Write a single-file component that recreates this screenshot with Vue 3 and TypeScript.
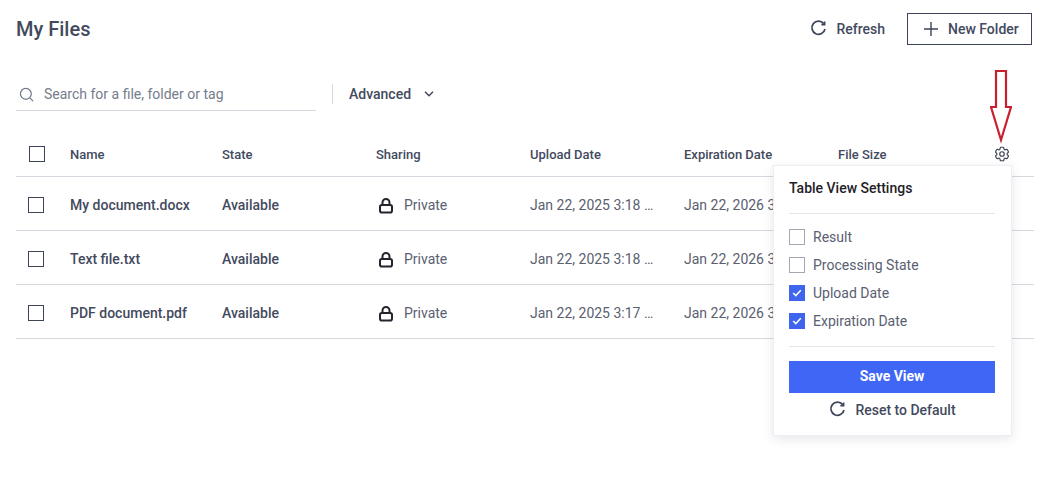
<script setup lang="ts">
interface FileRow { name: string; upload: string }
const rows: FileRow[] = [
  { name: 'My document.docx', upload: 'Jan 22, 2025 3:18 PM' },
  { name: 'Text file.txt', upload: 'Jan 22, 2025 3:18 PM' },
  { name: 'PDF document.pdf', upload: 'Jan 22, 2025 3:17 PM' },
]
const expiry = 'Jan 22, 2026 3:18 PM'
const settings = [
  { label: 'Result', on: false },
  { label: 'Processing State', on: false },
  { label: 'Upload Date', on: true },
  { label: 'Expiration Date', on: true },
]
const refreshPath = 'M13.7 3.6A6.6 6.6 0 1 0 15 9'
const gearPath = 'M9.594 3.94c.09-.542.56-.94 1.11-.94h2.593c.55 0 1.02.398 1.11.94l.213 1.281c.063.374.313.686.645.87.074.04.147.083.22.127.325.196.72.257 1.075.124l1.217-.456a1.125 1.125 0 0 1 1.37.49l1.296 2.247a1.125 1.125 0 0 1-.26 1.431l-1.003.827c-.293.241-.438.613-.43.992a7.723 7.723 0 0 1 0 .255c-.008.378.137.75.43.991l1.004.827c.424.35.534.955.26 1.43l-1.298 2.247a1.125 1.125 0 0 1-1.369.491l-1.217-.456c-.355-.133-.75-.072-1.076.124a6.47 6.47 0 0 1-.22.128c-.331.183-.581.495-.644.869l-.213 1.281c-.09.543-.56.94-1.11.94h-2.594c-.55 0-1.019-.398-1.11-.94l-.213-1.281c-.062-.374-.312-.686-.644-.87a6.52 6.52 0 0 1-.22-.127c-.325-.196-.72-.257-1.076-.124l-1.217.456a1.125 1.125 0 0 1-1.369-.49l-1.297-2.247a1.125 1.125 0 0 1 .26-1.431l1.004-.827c.292-.24.437-.613.43-.991a6.932 6.932 0 0 1 0-.255c.007-.38-.138-.751-.43-.992l-1.004-.827a1.125 1.125 0 0 1-.26-1.43l1.297-2.247a1.125 1.125 0 0 1 1.37-.491l1.216.456c.356.133.751.072 1.076-.124.072-.044.146-.086.22-.128.332-.183.582-.495.644-.869l.214-1.28Z'
</script>

<template>
  <div class="page">
    <header class="top">
      <h1 class="title">My Files</h1>
      <div class="actions">
        <button class="refresh">
          <svg width="18" height="18" viewBox="-1 0 18 18" fill="none" stroke="#3d4459" stroke-width="1.7"><path :d="refreshPath" /><path d="M14.6 1.4v3.2h-3.2" /></svg>
          <span>Refresh</span>
        </button>
        <button class="new-folder">
          <svg width="16" height="16" viewBox="0 0 16 16" stroke="#3d4459" stroke-width="1.4"><path d="M8 1v14M1 8h14" /></svg>
          <span>New Folder</span>
        </button>
      </div>
    </header>

    <div class="filters">
      <label class="search">
        <svg width="15" height="15" viewBox="0 0 16 16" fill="none" stroke="#6f7787" stroke-width="1.3"><circle cx="7.3" cy="7.3" r="5.8" /><path d="M11.6 11.6 15 15" /></svg>
        <span class="placeholder">Search for a file, folder or tag</span>
      </label>
      <span class="vr"></span>
      <span class="advanced">Advanced</span>
      <svg class="chev" width="12" height="8" viewBox="0 0 12 8" fill="none" stroke="#3d4459" stroke-width="1.4"><path d="M2 1.8 6 5.8l4-4" /></svg>
    </div>

    <div class="table">
      <div class="row head">
        <span class="box head-box"></span>
        <span>Name</span><span>State</span><span>Sharing</span><span>Upload Date</span><span>Expiration Date</span><span>File Size</span>
        <svg class="gear" width="18" height="18" viewBox="0 0 24 24" fill="none" stroke="#3d4459" stroke-width="1.6" stroke-linejoin="round"><path :d="gearPath" /><circle cx="12" cy="12" r="3" /></svg>
      </div>
      <div v-for="r in rows" :key="r.name" class="row body">
        <span class="box"></span>
        <span class="strong">{{ r.name }}</span>
        <span class="strong">Available</span>
        <span class="sharing">
          <svg class="lock" width="14" height="16" viewBox="0 0 14 16" fill="none" stroke="#22252e" stroke-width="2"><path d="M3.500 7V4.500a3.500 3.500 0 0 1 7 0V7" /><rect x="1" y="7" width="12" height="7.500" rx="1.800" /></svg>
          <span>Private</span>
        </span>
        <span class="cell">{{ r.upload }}</span>
        <span class="cell">{{ expiry }}</span>
      </div>
    </div>

    <svg class="arrow" width="22" height="74" viewBox="0 0 22 74" fill="#fff" stroke="#c8202f" stroke-width="2.200"><path d="M6 1h10v36h5L11 70 1 37h5z" /></svg>

    <aside class="pop">
      <div class="pop-title">Table View Settings</div>
      <div class="opts">
        <label v-for="s in settings" :key="s.label" class="opt">
          <span class="cb" :class="{ on: s.on }">
            <svg v-if="s.on" width="10" height="8" viewBox="0 0 10 8" fill="none" stroke="#fff" stroke-width="1.6"><path d="M1.200 4 3.800 6.500 8.800 1.300" /></svg>
          </span>
          <span>{{ s.label }}</span>
        </label>
      </div>
      <button class="save">Save View</button>
      <button class="reset">
        <svg width="18" height="18" viewBox="-1 0 18 18" fill="none" stroke="#3d4459" stroke-width="1.7"><path :d="refreshPath" /><path d="M14.6 1.4v3.2h-3.2" /></svg>
        <span>Reset to Default</span>
      </button>
    </aside>
  </div>
</template>

<style>
html, body { margin: 0; background: #fff; }
</style>

<style scoped>
.page {
  position: relative;
  width: 1053px;
  height: 502px;
  overflow: hidden;
  box-sizing: border-box;
  padding: 13px 19px 0 16px;
  font-family: Roboto, "Liberation Sans", sans-serif;
  font-size: 14px;
  color: #434a5e;
}
button { font: inherit; color: inherit; background: none; border: 0; padding: 0; }
.top { display: flex; justify-content: space-between; align-items: center; height: 32px; padding-right: 2px; }
.title { margin: 0; font-size: 20px; font-weight: 500; line-height: 32px; }
.actions { display: flex; align-items: center; }
.refresh { display: flex; align-items: center; gap: 9px; margin-right: 22px; font-weight: 500; }
.new-folder {
  display: flex; align-items: center; gap: 9px;
  box-sizing: border-box; width: 125px; height: 32px;
  padding-left: 15px; border: 1px solid #3d4459; font-weight: 500;
}
.filters { display: flex; align-items: center; margin-top: 33px; height: 32px; }
.search {
  display: flex; align-items: center; gap: 10px;
  box-sizing: border-box; width: 300px; height: 33px; margin-top: 1px; padding-left: 3px;
  border-bottom: 1px solid #d5d8de;
}
.placeholder { color: #757c8b; }
.vr { width: 1px; height: 20px; background: #d5d8de; margin: 0 16px; }
.advanced { font-weight: 500; }
.chev { margin-left: 12px; }
.table { margin-top: 22px; }
.row { display: grid; grid-template-columns: 54px 152px 154px 154px 154px 154px 1fr; align-items: center; border-bottom: 1px solid #d5d8de; }
.head { height: 44px; font-size: 13px; font-weight: 500; position: relative; }
.body { height: 51px; padding-top: 2px; }
.box { display: block; box-sizing: border-box; width: 16px; height: 16px; margin-left: 12px; border: 1px solid #3d4459; }
.head-box { margin-left: 13px; }
.gear { position: absolute; left: 977px; top: 13px; }
.strong { font-weight: 500; }
.sharing { display: flex; align-items: center; gap: 11px; padding-left: 3px; color: #5a6070; }
.lock { margin-top: 2px; }
.cell {
  white-space: nowrap; overflow: hidden; text-overflow: ellipsis;
  width: 124px; color: #5a6070;
}
.arrow { position: absolute; left: 990px; top: 70px; }
.pop {
  position: absolute; left: 773px; top: 165px;
  box-sizing: border-box; width: 239px; height: 271px; padding: 0 16px 0 15px;
  background: #fff; border: 1px solid #eceef2;
  box-shadow: 0 3px 10px rgba(60, 70, 100, .13);
}
.pop-title { height: 47px; line-height: 44px; border-bottom: 1px solid #e3e5ea; font-weight: 500; color: #1f2128; margin-bottom: 9px; }
.opts { border-bottom: 1px solid #e3e5ea; padding-bottom: 11px; margin-bottom: 14px; }
.opt { display: flex; align-items: center; gap: 8px; height: 28px; color: #5a6070; }
.cb { display: flex; align-items: center; justify-content: center; box-sizing: border-box; width: 16px; height: 16px; border: 1px solid #a3a8b3; }
.cb.on { background: #3f64ee; border-color: #3f64ee; }
.save { display: block; width: 100%; height: 32px; padding-bottom: 2px; background: #3f66f5; color: #fff; font-weight: 700; }
.reset { display: flex; align-items: center; justify-content: center; gap: 9px; width: 100%; height: 34px; font-weight: 500; }
</style>
